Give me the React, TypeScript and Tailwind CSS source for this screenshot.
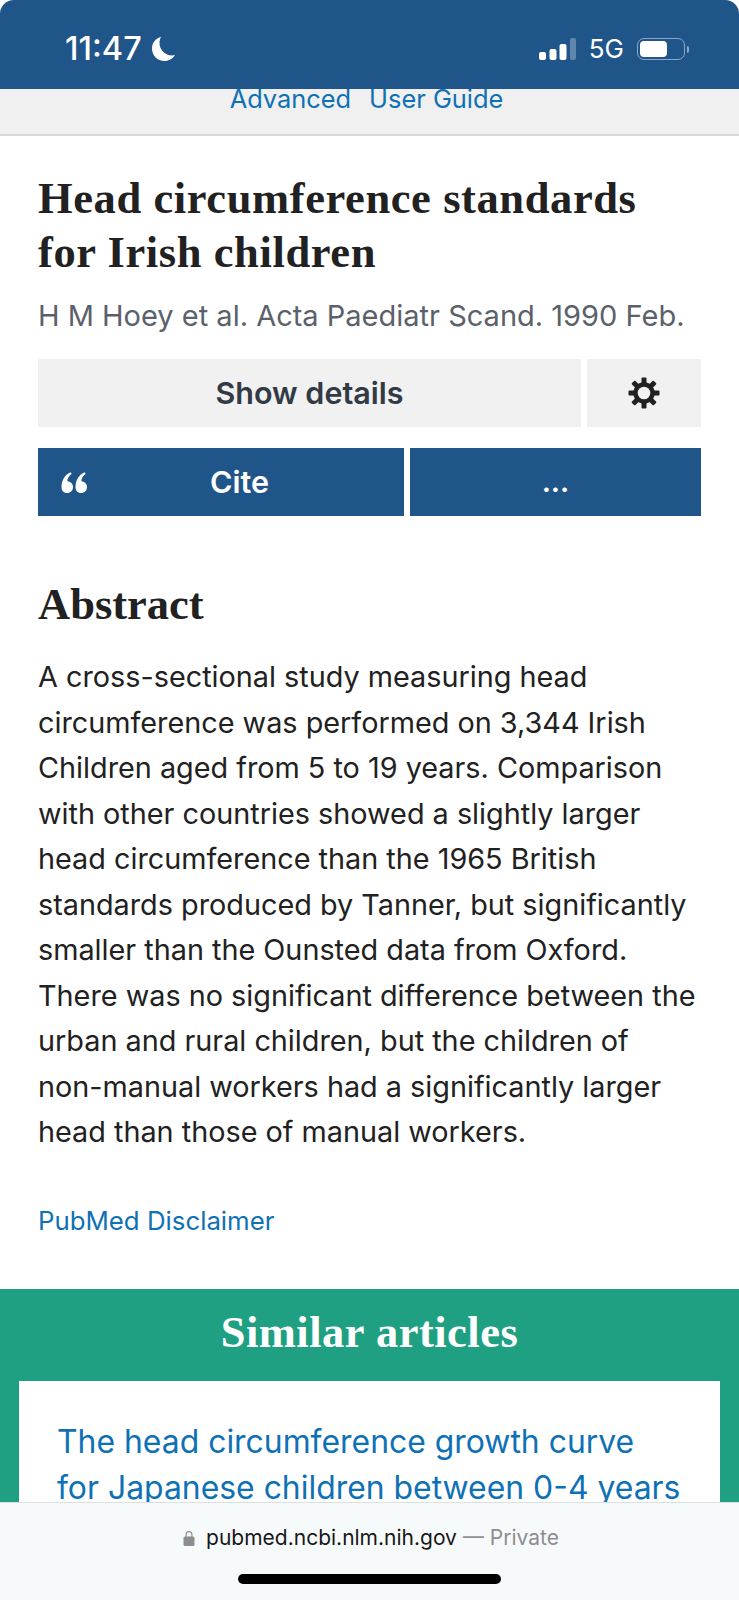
import React from "react";

const Gear = () => (
  <svg width="32" height="32" viewBox="0 0 32 32" fill="#212121">
    {[0, 45, 90, 135].map((a) => (
      <rect key={a} x="13.500" y="0.500" width="5" height="31" rx="1" transform={`rotate(${a} 16 16)`} />
    ))}
    <circle cx="16" cy="16" r="8.500" fill="none" stroke="#212121" strokeWidth="4.500" />
    <circle cx="16" cy="16" r="6.300" fill="#f1f1f1" />
  </svg>
);

const Quote = () => (
  <svg width="26" height="21" viewBox="0 0 26 21" fill="#fff">
    <path d="M6 21C2.500 21 .5 18.500.5 15 .5 8.500 3.500 3 9.500.3l1.200 1.500C7.800 4 6.400 6.500 6.300 9.300 9.800 9.600 12 12 12 15c0 3.500-2.500 6-6 6z" />
    <path d="M20 21c-3.500 0-5.500-2.500-5.500-6 0-6.500 3-12 9-14.700l1.200 1.500c-2.900 2.200-4.300 4.700-4.400 7.500 3.500.3 5.700 2.700 5.700 5.700 0 3.500-2.500 6-6 6z" />
  </svg>
);

const body =
  "A cross-sectional study measuring head circumference was performed on 3,344 Irish Children aged from 5 to 19 years. Comparison with other countries showed a slightly larger head circumference than the 1965 British standards produced by Tanner, but significantly smaller than the Ounsted data from Oxford. There was no significant difference between the urban and rural children, but the children of non-manual workers had a significantly larger head than those of manual workers.";

export default function App() {
  return (
    <div className="relative w-[739px] h-[1600px] overflow-hidden bg-white font-['Inter','Liberation_Sans',sans-serif]">
      {/* status bar */}
      <div className="h-[89px] bg-[#20558a] rounded-t-[14px] flex items-center justify-between pl-[65px] pr-[50px] pt-[9px] text-white">
        <div className="flex items-center gap-[9px]">
          <span className="text-[32.500px] leading-none font-medium">11:47</span>
          <svg width="26" height="26" viewBox="0 0 26 26" fill="#fff">
            <path d="M9.500 1C4.500 2.500 1 7 1 12.500 1 19.500 6.500 25 13.500 25c4.500 0 8.500-2.500 10.500-6-1 .3-2 .4-3 .4-7 0-12.500-5.500-12.500-12.400 0-2.200.6-4.300 1.500-6z" />
          </svg>
        </div>
        <div className="flex items-center">
          <svg width="37" height="22" viewBox="0 0 37 22" fill="#fff">
            <rect x="0" y="14" width="7" height="8" rx="2" />
            <rect x="10.500" y="11" width="7" height="11" rx="2" />
            <rect x="20.500" y="6" width="7" height="16" rx="2" />
            <rect x="31" y="0" width="6" height="22" rx="2" fill="#5f86ad" />
          </svg>
          <span className="ml-[13px] text-[26px] leading-none font-normal">5G</span>
          <div className="ml-[13px] w-[48px] h-[22px] rounded-[7px] border-[1.500px] border-[#8aa8c6] p-[2px]">
            <div className="w-[27px] h-full bg-white rounded-[4px]" />
          </div>
          <div className="ml-[2px] w-[2px] h-[7px] bg-[#8aa8c6] rounded-r-sm" />
        </div>
      </div>

      {/* search strip */}
      <div className="h-[47px] bg-[#f0f0f0] border-b-2 border-[#d9d9d9] flex justify-center gap-[18px] pr-[6px] text-[#0f71b5] text-[25.400px] leading-[20px]">
        <span>Advanced</span>
        <span>User Guide</span>
      </div>

      {/* article head */}
      <div className="px-[38px] pt-[35px]">
        <h1 className="font-['Liberation_Serif',serif] font-bold text-[44.500px] leading-[54px] text-[#212121] tracking-[0.600px] whitespace-nowrap">
          Head circumference standards
          <br />
          for Irish children
        </h1>
        <p className="mt-[17px] text-[29px] leading-[40px] text-[#5b616b] whitespace-nowrap">
          H M Hoey et al. Acta Paediatr Scand. 1990 Feb.
        </p>

        <div className="mt-[23px] flex gap-[6px] h-[68px]">
          <div className="flex-1 bg-[#f1f1f1] flex items-center justify-center text-[30.500px] font-semibold text-[#323a45]">
            Show details
          </div>
          <div className="w-[114px] bg-[#f1f1f1] flex items-center justify-center">
            <Gear />
          </div>
        </div>

        <div className="mt-[21px] flex gap-[6px] h-[68px] text-white">
          <div className="w-[366px] bg-[#20558a] flex items-center pl-[23px]">
            <Quote />
            <span className="ml-[123px] text-[30.500px] font-semibold">Cite</span>
          </div>
          <div className="flex-1 bg-[#20558a] flex items-center justify-center text-[29px] font-semibold">
            ...
          </div>
        </div>

        <h2 className="mt-[62px] font-['Liberation_Serif',serif] font-bold text-[44.500px] leading-[52px] text-[#212121]">
          Abstract
        </h2>
        <p className="mt-[24px] text-[28.800px] leading-[45.500px] text-[#212121]">{body}</p>

        <div className="mt-[46px] text-[25.800px] leading-[40px] text-[#0f71b5]">PubMed Disclaimer</div>
      </div>

      {/* similar articles */}
      <div className="mt-[48px] bg-[#20a082] px-[19px] pt-[13px] h-[400px]">
        <h2 className="text-center font-['Liberation_Serif',serif] font-bold text-[44.500px] leading-[60px] text-white tracking-[0.500px]">
          Similar articles
        </h2>
        <div className="mt-[19px] h-[300px] bg-white px-[38px] pt-[38px] text-[31.900px] leading-[46px] text-[#0f71b5] whitespace-nowrap">
          The head circumference growth curve
          <br />
          for Japanese children between 0-4 years
        </div>
      </div>

      {/* browser bar */}
      <div className="absolute left-0 right-0 bottom-0 h-[98px] bg-[#f7fafb] border-t border-[#dcdfe2]">
        <div className="mt-[20px] flex items-center justify-center text-[21px] leading-[30px] pl-[3px]">
          <svg width="12" height="16" viewBox="0 0 12 16" fill="#8e8e8e" className="mr-[11px]">
            <path d="M2.500 7V4.500a3.500 3.500 0 017 0V7H8.300V4.500a2.300 2.300 0 00-4.600 0V7z" />
            <rect x="0.500" y="6.500" width="11" height="9.500" rx="1.500" />
          </svg>
          <span className="text-[#171717]">pubmed.ncbi.nlm.nih.gov</span>
          <span className="ml-[6px] text-[#8e8e8e]">— Private</span>
        </div>
        <div className="mx-auto mt-[21px] w-[263px] h-[10px] rounded-full bg-black" />
      </div>
    </div>
  );
}
